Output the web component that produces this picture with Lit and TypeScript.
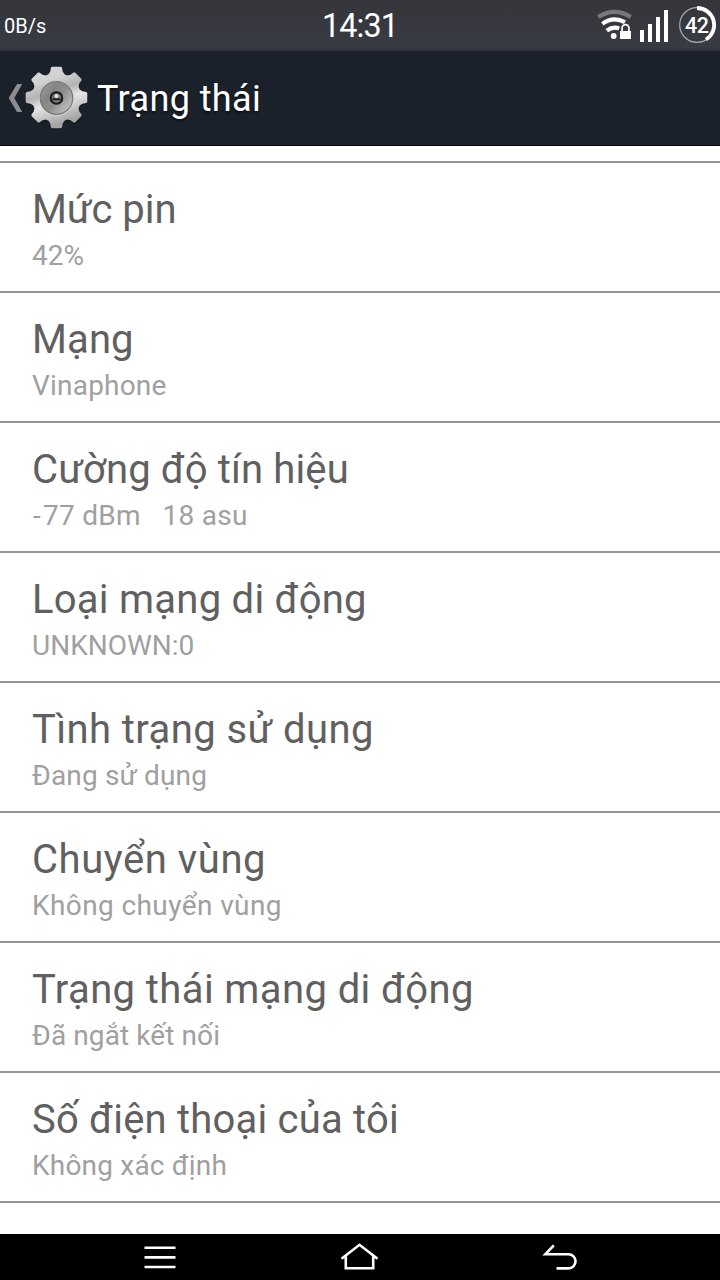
import { LitElement, html, css, svg } from "lit";
import { customElement } from "lit/decorators.js";

interface Row { title: string; value: string; ts: number; vs: number; }

const ROWS: Row[] = [
  { title: "Mức pin", value: "42%", ts: -0.05, vs: 0 },
  { title: "Mạng", value: "Vinaphone", ts: 0.1, vs: 0.2 },
  { title: "Cường độ tín hiệu", value: "-77 dBm   18 asu", ts: 0.12, vs: 0.28 },
  { title: "Loại mạng di động", value: "UNKNOWN:0", ts: 0.25, vs: 0 },
  { title: "Tình trạng sử dụng", value: "Đang sử dụng", ts: 0.41, vs: 0.15 },
  { title: "Chuyển vùng", value: "Không chuyển vùng", ts: 0.55, vs: 0.4 },
  { title: "Trạng thái mạng di động", value: "Đã ngắt kết nối", ts: 0.4, vs: 0.1 },
  { title: "Số điện thoại của tôi", value: "Không xác định", ts: 0.21, vs: 0.2 },
];

/** Outline of the eight-toothed cog, centred on (cx, cy). */
function cogPath(cx: number, cy: number): string {
  const tooth: [number, number][] = [[-8, -23.2], [-6.2, -26], [-5.6, -29.8], [-4.6, -30.8], [4.6, -30.8], [5.6, -29.8], [6.2, -26], [8, -23.2]];
  const points: string[] = [];
  for (let i = 0; i < 8; i++) {
    const a = (i * Math.PI) / 4;
    for (const [x, y] of tooth) {
      points.push(`${(cx + x * Math.cos(a) - y * Math.sin(a)).toFixed(2)} ${(cy + x * Math.sin(a) + y * Math.cos(a)).toFixed(2)}`);
    }
  }
  return `M${points.join("L")}Z`;
}

@customElement("app-root")
export class AppRoot extends LitElement {
  static styles = css`
    :host { display: flex; flex-direction: column; width: 720px; height: 1280px; overflow: hidden;
      background: #fff; font-family: Roboto, "Noto Sans", sans-serif; }
    svg { display: block; flex: none; }
    .status { height: 51px; flex: none; display: grid; grid-template-columns: 1fr auto 1fr; align-items: center;
      background: linear-gradient(#34363c, #393b42 48px, #2c2f37 50px, #2a2e37); color: #fff; box-sizing: border-box; }
    .speed { font-size: 20px; line-height: 24px; padding-left: 4px; }
    .clock { font-size: 32.3px; line-height: 38px; letter-spacing: -0.9px; }
    .icons { display: flex; justify-content: flex-end; align-self: start; }
    .bar { height: 95px; flex: none; box-sizing: border-box; background: #1b212b; border-bottom: 1px solid #08030f;
      display: flex; align-items: center; color: #fff; }
    .heading { font-size: 36px; line-height: 44px; margin-left: 9px; letter-spacing: 0.4px; padding-top: 2px;
      text-shadow: 0 2px 2px #0008; }
    .list { flex: 1; padding-top: 15px; }
    .row { height: 130px; box-sizing: border-box; border-top: 2px solid #969696; padding: 23px 32px 0; }
    .row:last-child { height: 132px; border-bottom: 2px solid #969696; }
    .title { font-size: 40px; line-height: 48px; color: #606060; }
    .value { font-size: 28px; line-height: 34px; color: #a0a0a0; margin-top: 5px; white-space: pre; }
    .minus { padding: 0 2px 0 1px; }
    .nav { height: 46px; flex: none; background: #000; }
  `;

  private gear() {
    return svg`<svg width="88" height="94" viewBox="0 0 88 94">
      <defs>
        <linearGradient id="m" x1="0" y1="0" x2="0.35" y2="1"><stop offset="0" stop-color="#d8d8d8"/><stop offset=".3" stop-color="#d2d2d2"/><stop offset=".5" stop-color="#b4b4b4"/><stop offset=".66" stop-color="#e6e6e6"/><stop offset="1" stop-color="#a4a4a4"/></linearGradient>
        <linearGradient id="d" x1="0" y1=".1" x2="1" y2=".9"><stop offset="0" stop-color="#a2a2a2"/><stop offset=".3" stop-color="#858585"/><stop offset=".55" stop-color="#8f8f8f"/><stop offset="1" stop-color="#cfcfcf"/></linearGradient>
      </defs>
      <path d="M17 33 8.7 47 17 61h5.2L14.3 47 22.2 33Z" fill="#8b8d91"/>
      <path d="${cogPath(57, 47.6)}" fill="#0a0c10" opacity=".5"/>
      <path d="${cogPath(56.5, 46.5)}" fill="url(#m)"/>
      <circle cx="56.5" cy="47.4" r="17.4" fill="#dedede"/>
      <circle cx="56.5" cy="47" r="16.3" fill="url(#d)" stroke="#777" stroke-width="1.2"/>
      <circle cx="56.5" cy="47" r="6.8" fill="#171717"/>
      <circle cx="56.5" cy="47" r="4.8" fill="#77756f"/>
      <path d="M52.5 47.5h8v1.6h-8z" fill="#171717"/>
      <circle cx="56.5" cy="45" r="2" fill="#e4e4e4"/>
    </svg>`;
  }

  private statusIcons() {
    return svg`<svg width="130" height="50" viewBox="590 0 130 50">
      <g fill="none">
        <path d="M598.3 17Q614.5 6.8 630.7 17" stroke="#77787b" stroke-width="4.2"/>
        <path d="M602.3 23.8Q613.5 15.8 625 22.3" stroke="#fff" stroke-width="4"/>
        <path d="M606.8 30.6Q612.5 26.2 619.3 28.3" stroke="#fff" stroke-width="4"/>
      </g>
      <circle cx="613.7" cy="36" r="2.9" fill="#fff"/>
      <path d="M620 31h11v8h-11zM621.2 31v-3a4.3 4.3 0 0 1 8.6 0V31" fill="#fff"/>
      <path d="M622.9 31v-2.8a2.6 2.6 0 0 1 5.2 0V31" fill="#393b42"/>
      <path d="M640 30h4v12h-4zM648 24h4v18h-4zM656 17h4v25h-4zM664 10h4v32h-4z" fill="#fff"/>
      <circle cx="697" cy="25" r="17.3" fill="none" stroke="#aaabad" stroke-width="1.2"/>
      <path d="M697 8A17 17 0 0 1 706 39.5" fill="none" stroke="#fff" stroke-width="3.8"/>
      <text x="696.8" y="32.8" text-anchor="middle" fill="#fff" font-size="21.5" font-weight="500" letter-spacing="-0.3">42</text>
    </svg>`;
  }

  private navIcons() {
    return svg`<svg width="720" height="46" viewBox="0 1234 720 46">
      <g fill="none" stroke="#fff" stroke-width="2.6">
        <path d="M144.5 1247.8h31M144.5 1257.4h31M144.5 1267h31"/>
        <path d="M341.5 1258.8 359.5 1244.8 377.5 1258.8M345.8 1256.5V1268.3H373.2V1256.5"/>
        <path d="M553.8 1245.3 545.3 1254.3H568.5A7 7 0 0 1 568.5 1268.4H556.5"/>
      </g>
    </svg>`;
  }

  private value(text: string) {
    return text.startsWith("-") ? html`<span class="minus">-</span>${text.slice(1)}` : text;
  }

  render() {
    return html`
      <div class="status"><div class="speed">0B/s</div><div class="clock">14:31</div><div class="icons">${this.statusIcons()}</div></div>
      <div class="bar">${this.gear()}<div class="heading">Trạng thái</div></div>
      <div class="list">
        ${ROWS.map(r => html`<div class="row">
          <div class="title" style="letter-spacing:${r.ts}px">${r.title}</div>
          <div class="value" style="letter-spacing:${r.vs}px">${this.value(r.value)}</div></div>`)}
      </div>
      <div class="nav">${this.navIcons()}</div>`;
  }
}
